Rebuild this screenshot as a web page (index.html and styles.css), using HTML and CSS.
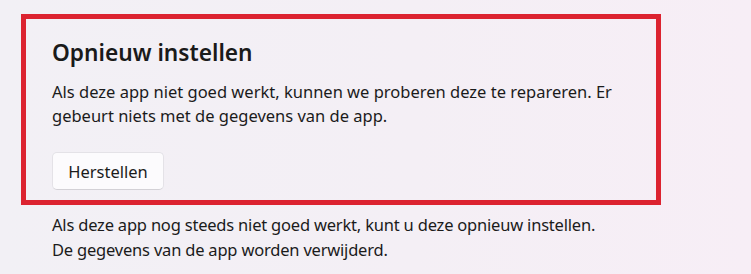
FILE: index.html
```html
<!DOCTYPE html>
<html lang="nl">
<head>
<meta charset="utf-8">
<title>Opnieuw instellen</title>
<link rel="stylesheet" href="styles.css">
</head>
<body>
<main class="page">
  <section class="highlight">
    <h2 class="title">Opnieuw instellen</h2>
    <p class="desc">Als deze app niet goed werkt, kunnen we proberen deze te repareren. Er<br>gebeurt niets met de gegevens van de app.</p>
    <button class="btn" type="button">Herstellen</button>
  </section>
  <p class="note">Als deze app nog steeds niet goed werkt, kunt u deze opnieuw instellen.<br>De gegevens van de app worden verwijderd.</p>
</main>
</body>
</html>
```
FILE: styles.css
```css
html, body {
  margin: 0;
  padding: 0;
}
body {
  width: 751px;
  height: 274px;
  overflow: hidden;
  background: linear-gradient(90deg, #f2f0f5 0%, #f4eff5 55%, #f7eef6 100%);
  font-family: "Segoe UI", "Noto Sans", "Open Sans", sans-serif;
  color: #1b1b1b;
}
.page {
  padding: 14px 0 0 21px;
}
.highlight {
  box-sizing: border-box;
  width: 640px;
  height: 191px;
  border: 5px solid #dc2330;
  padding: 0 26px;
}
.title {
  margin: 17px 0 0;
  font-size: 22.7px;
  line-height: 34px;
  font-weight: 600;
  color: #1a1a1a;
}
.desc {
  margin: 10px 0 0;
  font-size: 16.5px;
  line-height: 24px;
}
.btn {
  margin-top: 24px;
  width: 112px;
  height: 38px;
  border: 1px solid #e4e2e7;
  border-bottom-color: #d3d1d6;
  border-radius: 5px;
  background: #fcfbfd;
  font-family: inherit;
  font-size: 16.5px;
  color: #1b1b1b;
  padding: 0;
}
.note {
  margin: 7px 0 0 31px;
  font-size: 16.5px;
  line-height: 25px;
  letter-spacing: -0.2px;
}
```
